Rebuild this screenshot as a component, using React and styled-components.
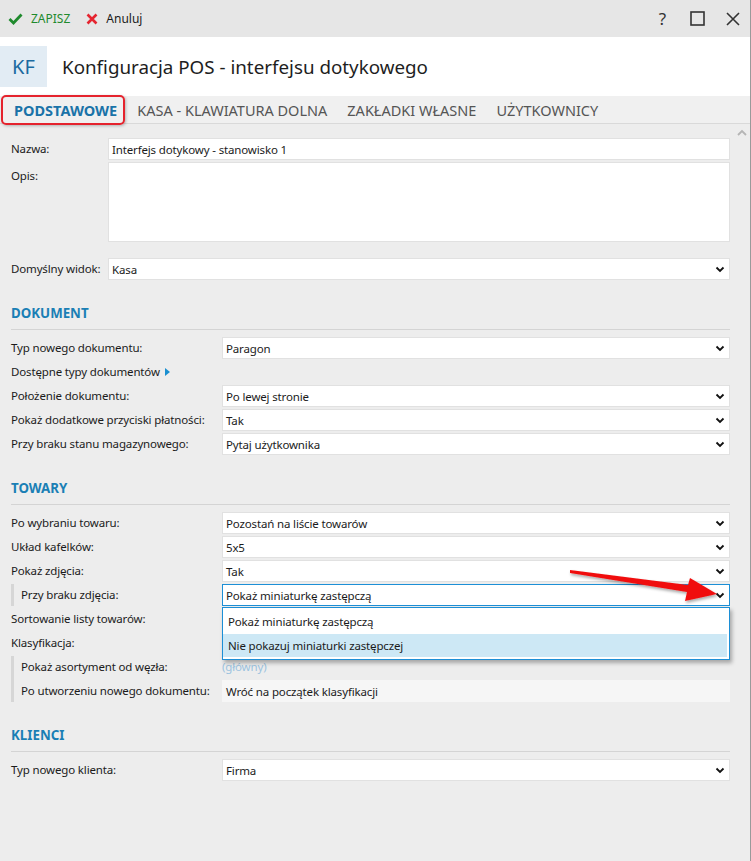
import React from "react";
import styled, { createGlobalStyle } from "styled-components";

const Global = createGlobalStyle`
  html, body { margin: 0; padding: 0; background: #ededed; }
  body { font-family: "Noto Sans", "Open Sans", sans-serif; color: #1b1b1b; }
  * { box-sizing: border-box; }
`;

const Window = styled.div`
  position: relative;
  width: 751px;
  height: 861px;
  display: flex;
  flex-direction: column;
  border-right: 1px solid #9a9a9a;
  background: #ededed;
  overflow: hidden;
`;

const Toolbar = styled.div`
  height: 37px;
  background: #e6e6e6;
  display: flex;
  align-items: center;
  padding: 0 0 0 8px;
  flex-shrink: 0;
`;

const ToolButton = styled.div`
  display: flex;
  align-items: center;
  gap: 8px;
  margin-right: 16px;
  font-size: 12px;
  color: ${(p) => p.$color};
`;

const WinControls = styled.div`
  margin-left: auto;
  display: flex;
  align-items: center;
  height: 100%;
`;

const WinButton = styled.div`
  width: 35px;
  height: 100%;
  display: flex;
  align-items: center;
  justify-content: center;
  color: #333;
  font-size: 17px;
`;

const Header = styled.div`
  height: 59px;
  background: #fff;
  display: flex;
  align-items: center;
  flex-shrink: 0;
`;

const Badge = styled.div`
  width: 47px;
  height: 41px;
  background: #e2ecf4;
  color: #1b6aa0;
  font-size: 20px;
  display: flex;
  align-items: center;
  justify-content: center;
  margin-right: 15px;
`;

const Title = styled.div`
  font-size: 18.8px;
  color: #1e1e1e;
`;

const TabBar = styled.div`
  height: 28px;
  background: #f0f0f0;
  border-bottom: 1px solid #d9d9d9;
  display: flex;
  align-items: stretch;
  padding-left: 1px;
  flex-shrink: 0;
`;

const Tab = styled.div`
  display: flex;
  align-items: center;
  font-size: 14.5px;
  padding: 0 10px;
  color: ${(p) => (p.$active ? "#1a73a8" : "#555")};
  font-weight: ${(p) => (p.$active ? 700 : 400)};
  ${(p) =>
    p.$highlighted &&
    `
    border: 2px solid #e5232d;
    border-radius: 5px;
    padding: 0 6px 0 11px;
    margin: -1px 2px -2px 0;
    box-shadow: 1px 1px 3px rgba(0,0,0,0.25);
  `}
`;

const Body = styled.div`
  flex: 1;
  display: grid;
  grid-template-columns: 1fr 16px;
  min-height: 0;
`;

const Main = styled.div`
  padding: 14px 4px 0 11px;
  position: relative;
`;

const ScrollStrip = styled.div`
  display: flex;
  justify-content: center;
  padding-top: 5px;
`;

const Row = styled.div`
  display: grid;
  grid-template-columns: ${(p) => p.$label}px 1fr;
  align-items: ${(p) => (p.$top ? "start" : "center")};
  min-height: 22px;
  margin-top: ${(p) => p.$mt ?? 2}px;
  position: relative;
`;

const Label = styled.div`
  font-size: 11.5px;
  letter-spacing: -0.15px;
  line-height: 22px;
  white-space: nowrap;
  ${(p) => p.$indent && `padding-left: 7px;`}
  ${(p) => p.$top && `padding-top: 3px;`}
`;

const IndentGroup = styled.div`
  border-left: 3px solid #d6d6d6;
  margin-top: 2px;
  & > div:first-child { margin-top: 0; }
`;

const Field = styled.div`
  height: ${(p) => p.$h || 22}px;
  background: ${(p) => (p.$readonly ? "#f6f6f6" : "#fff")};
  border: 1px solid ${(p) => (p.$focus ? "#1c8fd6" : p.$readonly ? "#f6f6f6" : "#e1e1e1")};
  display: flex;
  align-items: center;
  padding: 0 4px 0 3px;
  font-size: 11.5px;
  letter-spacing: -0.15px;
  white-space: nowrap;
  position: relative;
`;

const FieldText = styled.span`
  flex: 1;
`;

const LinkValue = styled.div`
  font-size: 11.5px;
  letter-spacing: -0.15px;
  color: #9cc3df;
  line-height: 22px;
`;

const SubLink = styled.div`
  font-size: 11.5px;
  letter-spacing: -0.15px;
  line-height: 22px;
  margin-top: 2px;
  display: flex;
  align-items: center;
  gap: 5px;
`;

const Section = styled.div`
  margin-top: 23px;
`;

const SectionTitle = styled.div`
  font-size: 13.3px;
  font-weight: 700;
  color: #1a7fb5;
  line-height: 20px;
  padding-bottom: 6px;
  border-bottom: 1px solid #d4d4d4;
  margin-bottom: 7px;
`;

const Dropdown = styled.div`
  position: absolute;
  left: -1px;
  right: -1px;
  top: 22px;
  background: #fff;
  border: 1px solid #1c8fd6;
  box-shadow: 2px 3px 4px rgba(0, 0, 0, 0.3);
  z-index: 5;
  padding: 0 2px 2px 0;
`;

const Option = styled.div`
  height: ${(p) => p.$h}px;
  display: flex;
  align-items: center;
  padding-left: 5px;
  background: ${(p) => (p.$hover ? "#cde8f5" : "transparent")};
`;

const ArrowLayer = styled.svg`
  position: absolute;
  left: 560px;
  top: 560px;
  pointer-events: none;
  z-index: 10;
  overflow: visible;
`;

const Chevron = () => (
  <svg width="10" height="7" viewBox="0 0 10 7">
    <path d="M1.5 1.5 L5 5 L8.5 1.5" fill="none" stroke="#111" strokeWidth="1.8" />
  </svg>
);

const Select = ({ value, focus, children }) => (
  <Field $focus={focus}>
    <FieldText>{value}</FieldText>
    <Chevron />
    {children}
  </Field>
);

export default function App() {
  return (
    <>
      <Global />
      <Window>
        <Toolbar>
          <ToolButton $color="#1f8a2d">
            <svg width="15" height="12" viewBox="0 0 15 12">
              <path d="M1.5 6 L5.5 10 L13.5 1.5" fill="none" stroke="#1f8a2d" strokeWidth="2.8" />
            </svg>
            ZAPISZ
          </ToolButton>
          <ToolButton $color="#1b1b1b">
            <svg width="12" height="12" viewBox="0 0 12 12">
              <path d="M1.5 1.5 L10.5 10.5 M10.5 1.5 L1.5 10.5" stroke="#e52530" strokeWidth="2.6" />
            </svg>
            Anuluj
          </ToolButton>
          <WinControls>
            <WinButton>?</WinButton>
            <WinButton>
              <svg width="15" height="15" viewBox="0 0 15 15">
                <rect x="1" y="1" width="13" height="13" fill="none" stroke="#333" strokeWidth="1.6" />
              </svg>
            </WinButton>
            <WinButton>
              <svg width="14" height="14" viewBox="0 0 14 14">
                <path d="M1 1 L13 13 M13 1 L1 13" stroke="#333" strokeWidth="1.6" />
              </svg>
            </WinButton>
          </WinControls>
        </Toolbar>

        <Header>
          <Badge>KF</Badge>
          <Title>Konfiguracja POS - interfejsu dotykowego</Title>
        </Header>

        <TabBar>
          <Tab $active $highlighted>PODSTAWOWE</Tab>
          <Tab>KASA - KLAWIATURA DOLNA</Tab>
          <Tab>ZAKŁADKI WŁASNE</Tab>
          <Tab>UŻYTKOWNICY</Tab>
        </TabBar>

        <Body>
          <Main>
            <Row $label={97} $mt={0}>
              <Label>Nazwa:</Label>
              <Field>Interfejs dotykowy - stanowisko 1</Field>
            </Row>
            <Row $label={97} $top $mt={2}>
              <Label $top>Opis:</Label>
              <Field $h={80} />
            </Row>
            <Row $label={97} $mt={16}>
              <Label>Domyślny widok:</Label>
              <Select value="Kasa" />
            </Row>

            <Section>
              <SectionTitle>DOKUMENT</SectionTitle>
              <Row $label={211} $mt={0}>
                <Label>Typ nowego dokumentu:</Label>
                <Select value="Paragon" />
              </Row>
              <SubLink>
                Dostępne typy dokumentów
                <svg width="5" height="8" viewBox="0 0 5 8">
                  <path d="M0 0 L5 4 L0 8 Z" fill="#1a8fd0" />
                </svg>
              </SubLink>
              <Row $label={211}>
                <Label>Położenie dokumentu:</Label>
                <Select value="Po lewej stronie" />
              </Row>
              <Row $label={211}>
                <Label>Pokaż dodatkowe przyciski płatności:</Label>
                <Select value="Tak" />
              </Row>
              <Row $label={211}>
                <Label>Przy braku stanu magazynowego:</Label>
                <Select value="Pytaj użytkownika" />
              </Row>
            </Section>

            <Section>
              <SectionTitle>TOWARY</SectionTitle>
              <Row $label={211} $mt={0}>
                <Label>Po wybraniu towaru:</Label>
                <Select value="Pozostań na liście towarów" />
              </Row>
              <Row $label={211}>
                <Label>Układ kafelków:</Label>
                <Select value="5x5" />
              </Row>
              <Row $label={211}>
                <Label>Pokaż zdjęcia:</Label>
                <Select value="Tak" />
              </Row>
              <IndentGroup>
                <Row $label={208}>
                  <Label $indent>Przy braku zdjęcia:</Label>
                  <Select value="Pokaż miniaturkę zastępczą" focus>
                    <Dropdown>
                      <Option $h={26}>Pokaż miniaturkę zastępczą</Option>
                      <Option $h={23} $hover>Nie pokazuj miniaturki zastępczej</Option>
                    </Dropdown>
                  </Select>
                </Row>
              </IndentGroup>
              <Row $label={211}>
                <Label>Sortowanie listy towarów:</Label>
                <div />
              </Row>
              <Row $label={211}>
                <Label>Klasyfikacja:</Label>
                <div />
              </Row>
              <IndentGroup>
                <Row $label={208}>
                  <Label $indent>Pokaż asortyment od węzła:</Label>
                  <LinkValue>(główny)</LinkValue>
                </Row>
                <Row $label={208}>
                  <Label $indent>Po utworzeniu nowego dokumentu:</Label>
                  <Field $readonly>Wróć na początek klasyfikacji</Field>
                </Row>
              </IndentGroup>
            </Section>

            <Section>
              <SectionTitle>KLIENCI</SectionTitle>
              <Row $label={211} $mt={0}>
                <Label>Typ nowego klienta:</Label>
                <Select value="Firma" />
              </Row>
            </Section>
          </Main>
          <ScrollStrip>
            <svg width="10" height="7" viewBox="0 0 10 7">
              <path d="M1 6 L5 2 L9 6" fill="none" stroke="#b5b5b5" strokeWidth="1.8" />
            </svg>
          </ScrollStrip>
        </Body>

        <ArrowLayer width="170" height="50" viewBox="0 0 170 50">
          <defs>
            <filter id="sh" x="-20%" y="-50%" width="140%" height="200%">
              <feDropShadow dx="1" dy="2" stdDeviation="1.5" floodColor="#000" floodOpacity="0.35" />
            </filter>
          </defs>
          <polygon
            points="10,10 128,25 130,18 157,34 125,41 127,32 10,13"
            fill="#f01010"
            filter="url(#sh)"
          />
        </ArrowLayer>
      </Window>
    </>
  );
}
